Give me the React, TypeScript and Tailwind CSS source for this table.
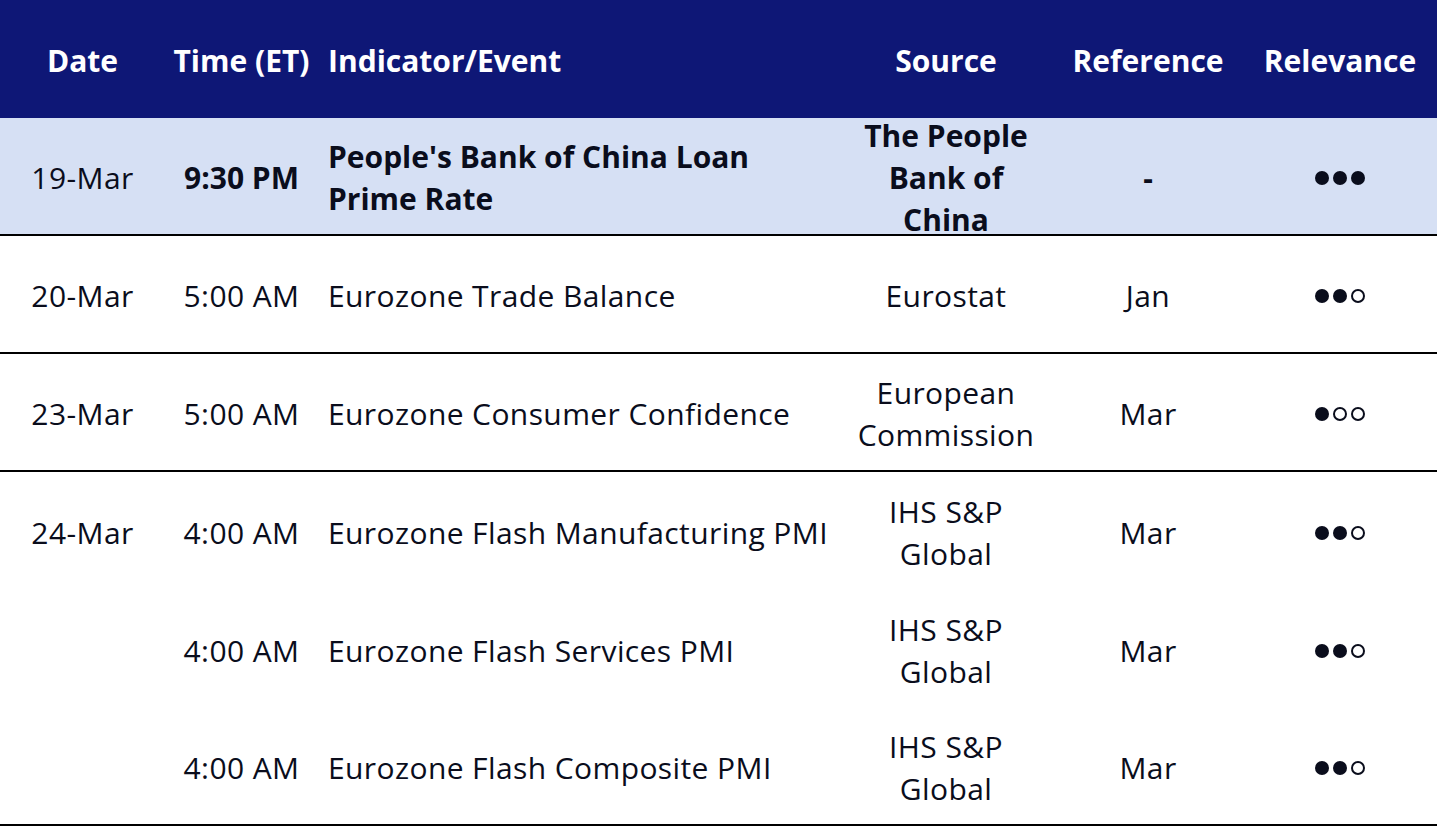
import React from "react";

type Row = {
  date?: string;
  time: string;
  event: React.ReactNode;
  source: React.ReactNode;
  ref: string;
  rel: number;
  highlight?: boolean;
  border?: boolean;
};

const rows: Row[] = [
  {
    date: "19-Mar",
    time: "9:30 PM",
    event: (
      <>
        People's Bank of China Loan
        <br />
        Prime Rate
      </>
    ),
    source: (
      <>
        The People
        <br />
        Bank of
        <br />
        China
      </>
    ),
    ref: "-",
    rel: 3,
    highlight: true,
    border: true,
  },
  { date: "20-Mar", time: "5:00 AM", event: "Eurozone Trade Balance", source: "Eurostat", ref: "Jan", rel: 2, border: true },
  {
    date: "23-Mar",
    time: "5:00 AM",
    event: "Eurozone Consumer Confidence",
    source: (
      <>
        European
        <br />
        Commission
      </>
    ),
    ref: "Mar",
    rel: 1,
    border: true,
  },
  {
    date: "24-Mar",
    time: "4:00 AM",
    event: "Eurozone Flash Manufacturing PMI",
    source: (
      <>
        IHS S&amp;P
        <br />
        Global
      </>
    ),
    ref: "Mar",
    rel: 2,
  },
  {
    time: "4:00 AM",
    event: "Eurozone Flash Services PMI",
    source: (
      <>
        IHS S&amp;P
        <br />
        Global
      </>
    ),
    ref: "Mar",
    rel: 2,
  },
  {
    time: "4:00 AM",
    event: "Eurozone Flash Composite PMI",
    source: (
      <>
        IHS S&amp;P
        <br />
        Global
      </>
    ),
    ref: "Mar",
    rel: 2,
    border: true,
  },
];

function Dots({ n }: { n: number }) {
  return (
    <div className="flex items-center gap-[4px]">
      {[0, 1, 2].map((i) =>
        i < n ? (
          <span key={i} className="block w-[14px] h-[14px] rounded-full bg-[#0a0d1c]" />
        ) : (
          <span key={i} className="block w-[14px] h-[14px] rounded-full border-[2px] border-[#0a0d1c]" />
        )
      )}
    </div>
  );
}

export default function App() {
  return (
    <div
      className="w-[1437px] h-[829px] bg-white text-[#0a0d1c] text-[30px] leading-[42px]"
      style={{ fontFamily: "'Open Sans', sans-serif" }}
    >
      <div className="flex h-[118px] items-center bg-[#0e1776] text-white font-bold pt-[4px]">
        <div className="w-[165px] text-center">Date</div>
        <div className="w-[153px] text-center">Time (ET)</div>
        <div className="w-[538px] pl-[10px]">Indicator/Event</div>
        <div className="w-[180px] text-center">Source</div>
        <div className="w-[224px] text-center">Reference</div>
        <div className="w-[160px] text-center">Relevance</div>
      </div>
      {rows.map((r, i) => (
        <div
          key={i}
          className={
            "flex h-[118px] items-center pt-[3px] " +
            (r.highlight ? "bg-[#d6e0f4] font-bold " : "tracking-[0.4px] ") +
            (r.border ? "border-b-[2px] border-black" : "")
          }
        >
          <div className="w-[165px] text-center font-normal tracking-[0.4px]">{r.date}</div>
          <div className="w-[153px] text-center">{r.time}</div>
          <div className="w-[538px] pl-[10px]">{r.event}</div>
          <div className="w-[180px] text-center">{r.source}</div>
          <div className="w-[224px] text-center">{r.ref}</div>
          <div className="w-[160px] flex justify-center">
            <Dots n={r.rel} />
          </div>
        </div>
      ))}
    </div>
  );
}
